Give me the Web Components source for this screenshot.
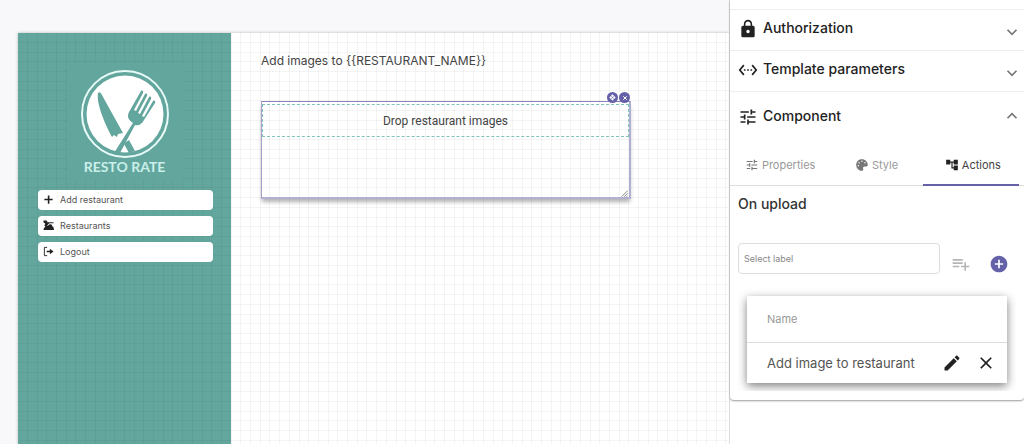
<!DOCTYPE html>
<html lang="en">
<head>
<meta charset="utf-8">
<meta name="viewport" content="width=device-width, initial-scale=1">
<title>Resto Rate – page editor</title>
<style>
:root{
  --accent:#6461a8;
  --teal:#63a69d;
  --ink:#333;
  --grid:url("data:image/svg+xml,%3Csvg xmlns='http://www.w3.org/2000/svg' width='97' height='97'%3E%3Cg fill='%23000' fill-opacity='.045'%3E%3Cpath d='M9 0h1v97h-1zM19 0h1v97h-1zM28 0h1v97h-1zM38 0h1v97h-1zM48 0h1v97h-1zM57 0h1v97h-1zM67 0h1v97h-1zM77 0h1v97h-1zM87 0h1v97h-1zM96 0h1v97h-1z'/%3E%3Cpath d='M0 9h97v1H0zM0 19h97v1H0zM0 28h97v1H0zM0 38h97v1H0zM0 48h97v1H0zM0 57h97v1H0zM0 67h97v1H0zM0 77h97v1H0zM0 87h97v1H0zM0 96h97v1H0z'/%3E%3C/g%3E%3C/svg%3E");
}
body{margin:0;background:#f8f8fb;color:var(--ink);font-family:Inter,"Liberation Sans",sans-serif;font-size:13px}
</style>
</head>
<body>
<page-editor></page-editor>
<script>
const ICONS={
  lock:'<path d="M18 8h-1V6c0-2.760-2.240-5-5-5S7 3.240 7 6v2H6c-1.100 0-2 .9-2 2v10c0 1.100.9 2 2 2h12c1.100 0 2-.9 2-2V10c0-1.100-.9-2-2-2zm-6 9c-1.100 0-2-.9-2-2s.9-2 2-2 2 .9 2 2-.9 2-2 2zm3.100-9H8.900V6c0-1.710 1.390-3.100 3.100-3.100s3.100 1.390 3.100 3.100v2z"/>',
  code:'<path d="M7.770 6.760L6.230 5.480.82 12l5.410 6.520 1.540-1.280L3.420 12l4.350-5.240zM7 13h2v-2H7v2zm10-2h-2v2h2v-2zm-6 2h2v-2h-2v2zm6.770-7.520l-1.540 1.280L20.580 12l-4.350 5.240 1.540 1.280L23.180 12l-5.410-6.520z"/>',
  tune:'<path d="M3 17v2h6v-2H3zM3 5v2h10V5H3zm10 16v-2h8v-2h-8v-2h-2v6h2zM7 9v2H3v2h4v2h2V9H7zm14 4v-2H11v2h10zm-6-4h2V7h4V5h-4V3h-2v6z"/>',
  palette:'<g transform="translate(2 2) scale(.039)"><path d="M204.300 5C104.900 24.400 24.800 104.300 5.200 203.400c-37 187 131.700 326.400 258.800 306.700 41.200-6.400 61.400-54.600 42.500-91.700-23.100-45.400 9.900-98.400 60.900-98.400h79.700c35.800 0 64.800-29.600 64.900-65.300C511.500 97.100 368.100-26.900 204.300 5zM96 320c-17.700 0-32-14.300-32-32s14.300-32 32-32 32 14.300 32 32-14.300 32-32 32zm32-128c-17.700 0-32-14.300-32-32s14.300-32 32-32 32 14.300 32 32-14.300 32-32 32zm128-64c-17.700 0-32-14.300-32-32s14.300-32 32-32 32 14.300 32 32-14.300 32-32 32zm128 64c-17.700 0-32-14.300-32-32s14.300-32 32-32 32 14.300 32 32-14.300 32-32 32z"/></g>',
  tree:'<path d="M22 11V3h-7v3H9V3H2v8h7V8h2v10h4v3h7v-8h-7v3h-2V8h2v3z"/>',
  listadd:'<path d="M14 10H2v2h12v-2zm0-4H2v2h12V6zm4 8v-4h-2v4h-4v2h4v4h2v-4h4v-2h-4zM2 16h8v-2H2v2z"/>',
  addcircle:'<path d="M12 2C6.480 2 2 6.480 2 12s4.480 10 10 10 10-4.480 10-10S17.520 2 12 2zm5 11h-4v4h-2v-4H7v-2h4V7h2v4h4v2z"/>',
  edit:'<path d="M3 17.250V21h3.750L17.810 9.940l-3.750-3.750L3 17.250zM20.710 7.040c.39-.39.39-1.020 0-1.410l-2.340-2.340c-.39-.39-1.020-.39-1.410 0l-1.830 1.830 3.750 3.750 1.830-1.830z"/>',
  close:'<path d="M19 6.410L17.590 5 12 10.590 6.410 5 5 6.410 10.590 12 5 17.590 6.410 19 12 13.410 17.590 19 19 17.590 13.410 12z"/>',
  down:'<path d="M3 7.500l9 9 9-9" fill="none" stroke="currentColor" stroke-width="3.500"/>',
  up:'<path d="M3 16.500l9-9 9 9" fill="none" stroke="currentColor" stroke-width="3.500"/>',
  plus:'<path d="M10.500 3h3.500v7.500h7v3h-7V21h-3.500v-7.500H3v-3h7.500z"/>',
  photo:'<path d="M1 1h7l2 4h13v2h-9l-4 4-2 2 3-1 4-3 3 0 3 5 2 2 1 6H1l1-4 3-4-2-2 2-4-4-3z"/>',
  logout:'<path d="M9 3H3v18h6" fill="none" stroke="currentColor" stroke-width="2"/><path d="M8 10.500h7V6l8 6-8 6v-4.500H8z"/>',
  move:'<path d="M12 1l5 5-5 5-5-5zM12 13l5 5-5 5-5-5zM6 7l5 5-5 5-5-5zM18 7l5 5-5 5-5-5z"/>',
  cross:'<path d="M5 5l14 14M19 5L5 19" fill="none" stroke="currentColor" stroke-width="4"/>',
  grip:'<path d="M2 23L23 2M11 23L23 11M19 23l4-4" fill="none" stroke="currentColor" stroke-width="3"/>'
};
function define(name,html,setup){
  const t=document.createElement('template');
  t.innerHTML=html;
  customElements.define(name,class extends HTMLElement{
    constructor(){
      super();
      this.attachShadow({mode:'open'}).append(t.content.cloneNode(true));
    }
    connectedCallback(){ if(setup) setup(this,this.shadowRoot); }
  });
}

define('ui-icon',`<style>
:host{display:inline-flex;flex:none;width:var(--size,16px);height:var(--size,16px)}
svg{display:block;width:100%;height:100%;fill:currentColor}
</style><svg viewBox="0 0 24 24" aria-hidden="true"></svg>`,
(el,root)=>{root.querySelector('svg').innerHTML=ICONS[el.getAttribute('name')]||'';});

define('resto-logo',`<style>
:host{display:flex;flex-direction:column;align-items:center;width:116px;height:116px;box-sizing:border-box;padding-top:6px;background:var(--teal)}
svg{display:block;width:90px;height:90px}
p{margin:0;font:700 14px/16px Lato,sans-serif;color:#c9efe9;white-space:nowrap}
</style>
<svg viewBox="0 0 90 90" aria-hidden="true">
<circle cx="45" cy="45" r="43" fill="none" stroke="#e8fbf8" stroke-width="2"/>
<circle cx="45" cy="45" r="38.500" fill="#fff"/>
<g fill="#63a69d">
<path d="M18 24c2-2 3.500 1 5 4l20 36-5 1-1 3-3-2-2 2c-6-11-16-33-14-44z"/>
<path d="M46 73l3-2 6 11-6 2-5-9z"/>
<path d="M34 84L53 54c-5-3-6-7-4-11L61 22c1-1 3 0 2 2L54 41l2 1 9-17c1-1 3 0 2 2l-9 17 2 1 9-17c1-1 3 0 2 2l-9 17 2 1 9-16c1-1 3 0 2 2L64 51c-2 4-5 6-9 5L40 84z"/>
</g></svg>
<p>RESTO RATE</p>`);

define('nav-item',`<style>
:host{display:block}
a{display:flex;align-items:center;gap:6px;height:20px;box-sizing:border-box;padding:0 5px 1px;border-radius:4px;background:#fff;color:#555;font-size:9px;line-height:12px;text-decoration:none}
ui-icon{--size:11px;color:#222}
</style><a href="#"><ui-icon></ui-icon><slot></slot></a>`,
(el,root)=>{root.querySelector('ui-icon').setAttribute('name',el.getAttribute('icon'));root.querySelector('ui-icon').connectedCallback();});

define('app-sidebar',`<style>
:host{display:flex;flex-direction:column;align-items:center;flex:none;width:213px;box-sizing:border-box;padding-top:30px;background:var(--grid) var(--teal)}
nav{display:flex;flex-direction:column;gap:6px;align-self:stretch;margin:11px 18px 0 20px}
</style><resto-logo></resto-logo>
<nav aria-label="Main">
<nav-item icon="plus">Add restaurant</nav-item>
<nav-item icon="photo">Restaurants</nav-item>
<nav-item icon="logout">Logout</nav-item>
</nav>`);

define('upload-box',`<style>
:host{display:block;position:relative;width:370px;max-width:100%;height:98px;box-sizing:border-box;border:1px solid #a5a3cb;border-top-color:#8785bb;border-right:2px solid #b2b0d2;border-bottom:2px solid #b2b0d2;padding-top:2px;box-shadow:0 4px 4px -1px rgba(0,0,0,.3)}
button.drop{display:block;width:100%;height:33px;margin:0;padding:0;box-sizing:border-box;border:1px dashed #7fc3b9;background:none;color:#444;font:12px/16px Roboto,sans-serif}
.tools{position:absolute;right:-1px;top:-10px;display:flex;gap:1px}
.tools button{display:grid;place-items:center;width:11px;height:11px;padding:0;border:0;border-radius:50%;background:var(--accent);color:#fff;--size:7px}
.tools .remove{--size:6px}
.grip{position:absolute;right:1px;bottom:0;--size:7px;color:#777}
</style>
<button class="drop"><slot></slot></button>
<div class="tools"><button aria-label="Move"><ui-icon name="move"></ui-icon></button><button class="remove" aria-label="Remove"><ui-icon name="cross"></ui-icon></button></div>
<ui-icon class="grip" name="grip"></ui-icon>`);

define('design-canvas',`<style>
:host{display:flex;min-width:0;margin:33px 0 0 18px;background:var(--grid) #fff;box-shadow:0 0 3px rgba(0,0,0,.25)}
main{flex:1;min-width:0;padding:18px 30px}
h1{margin:0 0 30px;font-size:12px;line-height:20px;font-weight:400;color:#444}
</style>
<app-sidebar></app-sidebar>
<main><h1>Add images to {{RESTAURANT_NAME}}</h1>
<upload-box>Drop restaurant images</upload-box></main>`);

define('panel-section',`<style>
:host{display:block;border-bottom:1px solid #eee}
:host([open]){border-bottom:0}
button{display:flex;align-items:center;gap:5px;width:100%;height:40px;padding:0 6px 2px 8px;border:0;background:none;color:#222;font:500 14px/20px Inter,sans-serif;text-align:left}
:host([open]) button{height:52px}
span{flex:1;padding-bottom:2px}
.lead{--size:20px}
.chev{--size:12px;color:#777;padding-top:6px}
:host([open]) .chev{padding:0 0 2px}
</style><button><ui-icon class="lead"></ui-icon><span><slot></slot></span><ui-icon class="chev"></ui-icon></button>`,
(el,root)=>{
  const open=el.hasAttribute('open'),[a,b]=root.querySelectorAll('ui-icon');
  a.setAttribute('name',el.getAttribute('icon'));b.setAttribute('name',open?'up':'down');
  root.querySelector('button').setAttribute('aria-expanded',open);
  a.connectedCallback();b.connectedCallback();
});

define('panel-tabs',`<style>
:host{display:flex;padding-right:5px;border-bottom:1px solid #ddd}
button{flex:1;display:flex;align-items:center;justify-content:center;gap:3px;height:42px;padding:2px 0 0 4px;border:0;border-bottom:2px solid transparent;margin-bottom:-1px;background:none;color:#999;font:11px/16px Inter,sans-serif;--size:14px}
ui-icon{color:#777}
button[aria-selected=true]{border-color:var(--accent);color:#444}
button[aria-selected=true] ui-icon{color:#222}
</style>
<button role="tab" aria-selected="false"><ui-icon name="tune"></ui-icon>Properties</button>
<button role="tab" aria-selected="false"><ui-icon name="palette"></ui-icon>Style</button>
<button role="tab" aria-selected="true"><ui-icon name="tree"></ui-icon>Actions</button>`,
el=>el.setAttribute('role','tablist'));

define('label-field',`<style>
:host{display:flex;padding:0 15px 0 8px}
input{flex:1;min-width:0;height:31px;box-sizing:border-box;padding:0 5px;border:1px solid #ddd;border-radius:4px;background:#fff;color:#333;font:9px/12px Inter,sans-serif}
input::placeholder{color:#888;opacity:1}
button{display:flex;align-self:flex-end;padding:0;border:0;background:none;--size:20px}
.list{margin-left:11px;color:#b5b5b5}
.add{margin-left:18px;color:var(--accent)}
</style>
<input type="text" aria-label="Select label" placeholder="Select label">
<button class="list" aria-label="Add to list"><ui-icon name="listadd"></ui-icon></button>
<button class="add" aria-label="Add action"><ui-icon name="addcircle"></ui-icon></button>`);

define('action-table',`<style>
:host{display:block;padding:10px 8px 9px}
.clip{padding:12px 9px 8px;overflow:hidden}
table{width:100%;border-collapse:collapse;background:#fff;box-shadow:0 3px 9px rgba(0,0,0,.5)}
th{height:46px;padding:0 0 0 20px;border-bottom:1px solid #ddd;font-size:11px;line-height:16px;font-weight:400;color:#999;text-align:left}
td{height:40px;padding:0 0 0 20px;font-size:13px;line-height:16px;color:#555}
td:last-child{padding:0 11px 0 0}
.acts{display:flex;justify-content:flex-end;gap:14px}
button{display:flex;padding:0;border:0;background:none;color:#222;--size:20px}
</style>
<div class="clip"><table><thead><tr><th scope="col" colspan="2">Name</th></tr></thead>
<tbody><tr><td>Add image to restaurant</td><td><div class="acts"><button aria-label="Edit"><ui-icon name="edit"></ui-icon></button><button aria-label="Delete"><ui-icon name="close"></ui-icon></button></div></td></tr></tbody></table></div>`);

define('settings-panel',`<style>
:host{display:block;border-left:1px solid #ddd;background:#fff}
section{padding-top:9px;border-radius:0 0 4px 4px;box-shadow:0 1px 2px rgba(0,0,0,.4)}
.first{border-top:1px solid #eee}
h2{margin:0;padding:8px 8px 29px;font-size:14px;line-height:20px;font-weight:500}
</style>
<section>
<panel-section class="first" icon="lock">Authorization</panel-section>
<panel-section icon="code">Template parameters</panel-section>
<panel-section icon="tune" open>Component</panel-section>
<panel-tabs></panel-tabs>
<h2>On upload</h2>
<label-field></label-field>
<action-table></action-table>
</section>`);

define('page-editor',`<style>
:host{display:grid;grid-template-columns:minmax(0,1fr) 295px;min-height:100vh}
design-canvas,settings-panel{min-width:0}
settings-panel{position:relative}
</style><design-canvas></design-canvas><settings-panel></settings-panel>`);
</script>
</body>
</html>
